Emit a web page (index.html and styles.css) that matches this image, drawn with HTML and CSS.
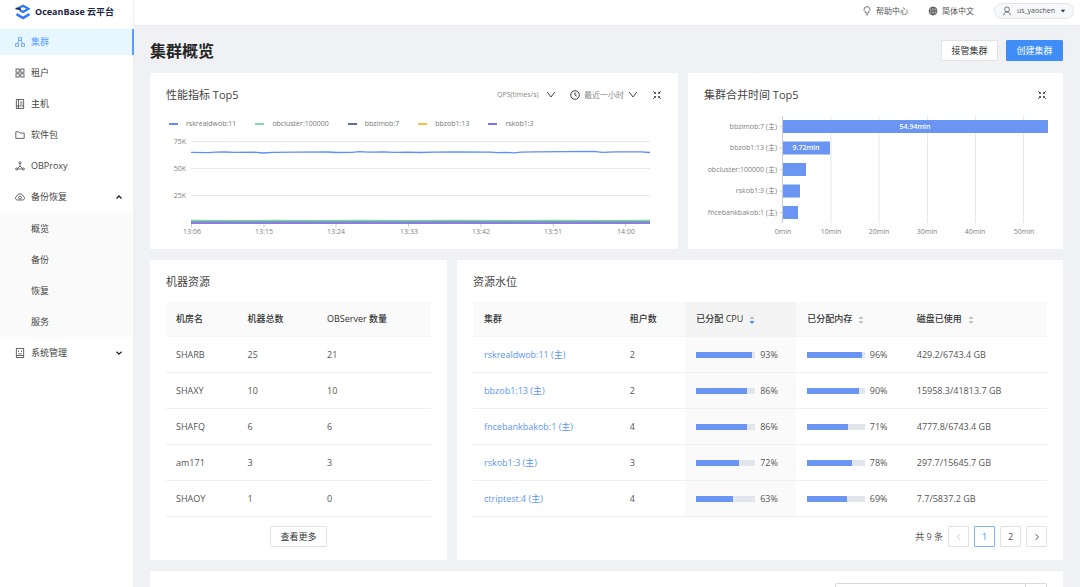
FILE: index.html
```html
<!DOCTYPE html>
<html lang="zh-CN">
<head>
    <meta charset="UTF-8">
    <meta name="viewport" content="width=device-width, initial-scale=1.0">
    <title>OceanBase 云平台</title>
    <link rel="stylesheet" href="styles.css">
</head>
<body>

<div class="layout">
    <aside class="sidebar">
        <div class="logo">
            <svg class="logo-icon" viewBox="0 0 16 16">
                <path d="M2.500 4.800L8 1.700l5.500 3.100L8 7.900 4.800 6.200" stroke="#2b7bf5" stroke-width="2.200"/>
                <path d="M.5 4.600h3.200l2 1" stroke="#16295c" stroke-width="1.800"/>
                <path d="M1.500 10.200L8 14l6.500-3.800" stroke="#2b7bf5" stroke-width="2.500"/>
            </svg>
            <span>OceanBase 云平台</span>
        </div>
        <nav class="menu">
            <a class="menu-item active" href="#">
                <svg class="icon" viewBox="0 0 10 10"><rect x="3.500" y=".7" width="3" height="2.600"/><rect x=".6" y="6.700" width="3" height="2.600"/><rect x="6.400" y="6.700" width="3" height="2.600"/><path d="M4.300 3.300L2.100 6.700M5.700 3.300l2.200 3.400"/></svg>
                集群
            </a>
            <a class="menu-item" href="#">
                <svg class="icon" viewBox="0 0 10 10"><rect x="1" y="1" width="3.200" height="3.200"/><rect x="5.800" y="1" width="3.200" height="3.200"/><rect x="1" y="5.800" width="3.200" height="3.200"/><rect x="5.800" y="5.800" width="3.200" height="3.200"/></svg>
                租户
            </a>
            <a class="menu-item" href="#">
                <svg class="icon" viewBox="0 0 10 10"><rect x="1.300" y=".6" width="7.400" height="8.800"/><path d="M3.500.6v8.800M5 3h2.500M5 5h2.500M1.300 7h7.400"/></svg>
                主机
            </a>
            <a class="menu-item" href="#">
                <svg class="icon" viewBox="0 0 10 10"><path d="M.8 1.800h3l1.200 1.300h4.200v5.300H.8z"/></svg>
                软件包
            </a>
            <a class="menu-item" href="#">
                <svg class="icon" viewBox="0 0 10 10"><circle cx="5" cy="1.800" r="1"/><circle cx="1.600" cy="8" r="1"/><circle cx="8.400" cy="8" r="1"/><path d="M5 2.800v2.400M5 5.200L2.300 7.400M5 5.200l2.700 2.200M2.600 8h4.800"/></svg>
                OBProxy
            </a>
            <a class="menu-item" href="#">
                <svg class="icon" viewBox="0 0 10 10"><path d="M2.600 8C1.200 8 .5 7.200.5 6.100S1.300 4.300 2 4.100C2.400 2.600 3.500 1.800 5 1.800s2.600.8 3 2.300c.9.200 1.500.9 1.500 2S8.800 8 7.400 8z"/><circle cx="5" cy="5.600" r="1.400"/></svg>
                备份恢复
                <svg class="arrow" viewBox="0 0 8 8"><path d="M1.500 5.500L4 3l2.500 2.500"/></svg>
            </a>
            <div class="submenu">
                <a class="submenu-item" href="#">概览</a>
                <a class="submenu-item" href="#">备份</a>
                <a class="submenu-item" href="#">恢复</a>
                <a class="submenu-item" href="#">服务</a>
            </div>
            <a class="menu-item" href="#">
                <svg class="icon" viewBox="0 0 10 10"><rect x="1.300" y=".6" width="7.400" height="8.800"/><path d="M3.500 2.500v1.500M6.500 2.500v1.500M3.300 5.300c1 1 2.400 1 3.400 0M1.300 7.500h7.400"/></svg>
                系统管理
                <svg class="arrow" viewBox="0 0 8 8"><path d="M1.500 2.700L4 5.200l2.500-2.500"/></svg>
            </a>
        </nav>
    </aside>

    <div class="content">
        <header class="topbar">
            <a class="top-link" href="#">
                <svg class="icon" viewBox="0 0 10 10"><path d="M3.600 7V6C2.600 5.400 2 4.600 2 3.600a3 3 0 0 1 6 0c0 1-.6 1.800-1.600 2.400v1zM3.800 8.800h2.400"/></svg>
                帮助中心
            </a>
            <a class="top-link" href="#">
                <svg class="icon" viewBox="0 0 10 10"><circle cx="5" cy="5" r="4" fill="#bbb"/><path d="M1 5h8M5 1v8"/><ellipse cx="5" cy="5" rx="2" ry="4"/></svg>
                简体中文
            </a>
            <button class="user">
                <svg class="icon" viewBox="0 0 10 10"><circle cx="5" cy="3.400" r="2.400"/><path d="M1.700 9.300C1.900 7.200 3.200 6 5 6s3.100 1.200 3.300 3.300"/></svg>
                us_yaochen
                <svg class="caret" viewBox="0 0 6 6"><path d="M.8 1.800h4.400L3 4.600z"/></svg>
            </button>
        </header>

        <main class="main">
            <div class="page-head">
                <h1>集群概览</h1>
                <button class="btn">接管集群</button>
                <button class="btn primary">创建集群</button>
            </div>

            <div class="row row-charts">
                <section class="card chart-card">
                    <div class="card-head">
                        <h2>性能指标 Top5</h2>
                        <label class="picker">
                            <select class="metric" aria-label="指标"><option>QPS(times/s)</option></select>
                            <svg class="down" viewBox="0 0 10 10"><path d="M1.200 2L5 7l3.800-5"/></svg>
                        </label>
                        <label class="picker">
                            <svg class="clock" viewBox="0 0 10 10"><circle cx="5" cy="5" r="4.300"/><path d="M5 2.300V5l1.800 1.200"/></svg>
                            <select class="range" aria-label="时间范围"><option>最近一小时</option></select>
                            <svg class="down" viewBox="0 0 10 10"><path d="M1.200 2L5 7l3.800-5"/></svg>
                        </label>
                        <button class="expand" aria-label="全屏"><svg viewBox="0 0 10 10"><path d="M1.200 1.200l2.200 2.200M8.800 1.200L6.600 3.400M1.200 8.800l2.200-2.200M8.800 8.800L6.600 6.600M2.200 3.500h1.300V2.200M7.800 3.500H6.500V2.200M2.200 6.500h1.300v1.300M7.800 6.500H6.500v1.300"/></svg></button>
                    </div>
                    <div class="legend">
                        <span class="legend-item c-blue">rskrealdwob:11</span>
                        <span class="legend-item c-green">obcluster:100000</span>
                        <span class="legend-item c-dark">bbzimob:7</span>
                        <span class="legend-item c-yellow">bbzob1:13</span>
                        <span class="legend-item c-purple">rskob1:3</span>
                    </div>
                    <svg class="line-chart" viewBox="0 0 496 106">
                        <path class="grid" d="M25 7.500h459M25 34.500h459M25 61.500h459"/>
                        <path class="axis" d="M25.500 90v3M98 90v3M170 90v3M242.500 90v3M315 90v3M387.500 90v3M459.500 90v3"/>
                        <polyline class="line dark" points="25,88 484,88"/>
                        <polyline class="line purple" points="25,89 484,89"/>
                        <polyline class="line green" points="25,86.500 65,86.700 105,86.500 150,86.700 195,86.500 240,86.700 290,86.400 350,86.700 390,86.500 440,86.700 484,86.500"/>
                        <polyline class="line blue" points="25,18.300 42,18.600 50,18.100 58,18 70,18.400 88,18.200 97,19 107,18.400 130,18.200 162,18 170,18.500 186,18.400 193,17.600 203,18.200 218,17.800 228,18.300 240,18.200 254,18.500 268,18.200 290,18 324,18.200 332,18.700 340,18.300 348,18.900 355,18.200 370,17.900 400,17.700 428,17.300 436,18.300 450,17.900 475,17.900 484,18.500"/>
                        <g class="y-labels">
                            <text x="20" y="10">75K</text>
                            <text x="20" y="37">50K</text>
                            <text x="20" y="64">25K</text>
                        </g>
                        <g class="x-labels">
                            <text x="26" y="100">13:06</text>
                            <text x="98" y="100">13:15</text>
                            <text x="170" y="100">13:24</text>
                            <text x="243" y="100">13:33</text>
                            <text x="315" y="100">13:42</text>
                            <text x="387" y="100">13:51</text>
                            <text x="460" y="100">14:00</text>
                        </g>
                    </svg>
                </section>

                <section class="card chart-card">
                    <div class="card-head">
                        <h2>集群合并时间 Top5</h2>
                        <button class="expand" aria-label="全屏"><svg viewBox="0 0 10 10"><path d="M1.200 1.200l2.200 2.200M8.800 1.200L6.600 3.400M1.200 8.800l2.200-2.200M8.800 8.800L6.600 6.600M2.200 3.500h1.300V2.200M7.800 3.500H6.500V2.200M2.200 6.500h1.300v1.300M7.800 6.500H6.500v1.300"/></svg></button>
                    </div>
                    <svg class="bar-chart" viewBox="0 0 343 128">
                        <path class="grid" d="M127 4v107M175 4v107M223.500 4v107M271.500 4v107M319.500 4v107"/>
                        <path class="axis" d="M78.500 4v107M76 14.500h2.500M76 36h2.500M76 57.500h2.500M76 79h2.500M76 100.500h2.500"/>
                        <rect class="bar" x="79" y="8" width="265" height="13"/>
                        <rect class="bar" x="79" y="29.500" width="47" height="13"/>
                        <rect class="bar" x="79" y="51" width="23" height="13"/>
                        <rect class="bar" x="79" y="72.500" width="17" height="13"/>
                        <rect class="bar" x="79" y="94" width="15" height="13"/>
                        <text class="bar-value" x="211" y="17">54.94min</text>
                        <text class="bar-value" x="102" y="38">9.72min</text>
                        <g class="y-labels">
                            <text x="73" y="17">bbzimob:7 (主)</text>
                            <text x="73" y="38">bbzob1:13 (主)</text>
                            <text x="73" y="60">obcluster:100000 (主)</text>
                            <text x="73" y="81">rskob1:3 (主)</text>
                            <text x="73" y="103">fncebankbakob:1 (主)</text>
                        </g>
                        <g class="x-labels">
                            <text x="79" y="122">0min</text>
                            <text x="127" y="122">10min</text>
                            <text x="175" y="122">20min</text>
                            <text x="223" y="122">30min</text>
                            <text x="271" y="122">40min</text>
                            <text x="320" y="122">50min</text>
                        </g>
                    </svg>
                </section>
            </div>

            <div class="row row-tables">
                <section class="card table-card">
                    <div class="card-head"><h2>机器资源</h2></div>
                    <table class="machines">
                        <thead>
                            <tr><th>机房名</th><th>机器总数</th><th>OBServer 数量</th></tr>
                        </thead>
                        <tbody>
                            <tr><td>SHARB</td><td>25</td><td>21</td></tr>
                            <tr><td>SHAXY</td><td>10</td><td>10</td></tr>
                            <tr><td>SHAFQ</td><td>6</td><td>6</td></tr>
                            <tr><td>am171</td><td>3</td><td>3</td></tr>
                            <tr><td>SHAOY</td><td>1</td><td>0</td></tr>
                        </tbody>
                    </table>
                    <div class="more"><button class="btn">查看更多</button></div>
                </section>

                <section class="card table-card">
                    <div class="card-head"><h2>资源水位</h2></div>
                    <table class="levels">
                        <thead>
                            <tr>
                                <th>集群</th>
                                <th>租户数</th>
                                <th class="sorted">已分配 CPU<svg class="sorter desc" viewBox="0 0 6 10"><path d="M3 1l2.500 3h-5z"/><path d="M3 9L.5 6h5z"/></svg></th>
                                <th>已分配内存<svg class="sorter" viewBox="0 0 6 10"><path d="M3 1l2.500 3h-5z"/><path d="M3 9L.5 6h5z"/></svg></th>
                                <th>磁盘已使用<svg class="sorter" viewBox="0 0 6 10"><path d="M3 1l2.500 3h-5z"/><path d="M3 9L.5 6h5z"/></svg></th>
                            </tr>
                        </thead>
                        <tbody>
                            <tr>
                                <td><a href="#">rskrealdwob:11 (主)</a></td>
                                <td>2</td>
                                <td class="sorted"><div class="progress"><div class="track"><div class="fill" style="width: 94%"></div></div><span>93%</span></div></td>
                                <td><div class="progress"><div class="track"><div class="fill" style="width: 96%"></div></div><span>96%</span></div></td>
                                <td>429.2/6743.4 GB</td>
                            </tr>
                            <tr>
                                <td><a href="#">bbzob1:13 (主)</a></td>
                                <td>2</td>
                                <td class="sorted"><div class="progress"><div class="track"><div class="fill" style="width: 87%"></div></div><span>86%</span></div></td>
                                <td><div class="progress"><div class="track"><div class="fill" style="width: 90%"></div></div><span>90%</span></div></td>
                                <td>15958.3/41813.7 GB</td>
                            </tr>
                            <tr>
                                <td><a href="#">fncebankbakob:1 (主)</a></td>
                                <td>4</td>
                                <td class="sorted"><div class="progress"><div class="track"><div class="fill" style="width: 86%"></div></div><span>86%</span></div></td>
                                <td><div class="progress"><div class="track"><div class="fill" style="width: 71%"></div></div><span>71%</span></div></td>
                                <td>4777.8/6743.4 GB</td>
                            </tr>
                            <tr>
                                <td><a href="#">rskob1:3 (主)</a></td>
                                <td>3</td>
                                <td class="sorted"><div class="progress"><div class="track"><div class="fill" style="width: 72%"></div></div><span>72%</span></div></td>
                                <td><div class="progress"><div class="track"><div class="fill" style="width: 78%"></div></div><span>78%</span></div></td>
                                <td>297.7/15645.7 GB</td>
                            </tr>
                            <tr>
                                <td><a href="#">ctriptest:4 (主)</a></td>
                                <td>4</td>
                                <td class="sorted"><div class="progress"><div class="track"><div class="fill" style="width: 63%"></div></div><span>63%</span></div></td>
                                <td><div class="progress"><div class="track"><div class="fill" style="width: 69%"></div></div><span>69%</span></div></td>
                                <td>7.7/5837.2 GB</td>
                            </tr>
                        </tbody>
                    </table>
                    <div class="pagination">
                        <span>共 9 条</span>
                        <button class="page" disabled aria-label="上一页"><svg viewBox="0 0 8 8"><path d="M5.500 1.200L2.500 4l3 2.800"/></svg></button>
                        <button class="page current">1</button>
                        <button class="page">2</button>
                        <button class="page" aria-label="下一页"><svg viewBox="0 0 8 8"><path d="M2.500 1.200L5.500 4l-3 2.800"/></svg></button>
                    </div>
                </section>
            </div>

            <section class="card search-card">
                <div class="search">
                    <input type="text" aria-label="搜索">
                    <button aria-label="搜索"></button>
                </div>
            </section>
        </main>
    </div>
</div>

</body>
</html>
```
FILE: styles.css
```css
* {
    box-sizing: border-box;
}
body {
    margin: 0;
    font-family: 'Open Sans', 'Noto Sans CJK SC', sans-serif;
    font-size: 9px;
    line-height: 14px;
    color: #555;
    background-color: #eff1f5;
}
a {
    color: inherit;
    text-decoration: none;
}
button, input, select {
    font: inherit;
    color: inherit;
}
button {
    cursor: pointer;
}
svg {
    display: block;
    fill: none;
    stroke: currentColor;
}
.layout {
    display: flex;
    height: 100vh;
}

/* 左侧菜单 */
.sidebar {
    flex: none;
    width: 134px;
    background-color: #fff;
    border-right: 1px solid #f0f0f0;
}
.logo {
    display: flex;
    align-items: center;
    gap: 4px;
    height: 24px;
    padding-left: 15px;
    color: #1b2440;
    font-weight: bold;
    white-space: nowrap;
}
.logo-icon {
    width: 16px;
    height: 16px;
}
.menu {
    padding-top: 5px;
}
.menu-item {
    display: flex;
    align-items: center;
    height: 26px;
    margin-bottom: 5px;
    padding: 0 10px 0 15px;
    color: #444;
}
.menu-item .icon {
    margin-right: 6px;
}
.menu-item.active {
    color: #5a9cff;
    background-color: #e6f7ff;
    border-right: 2px solid #5a9cff;
    margin-right: -1px;
}
.icon {
    width: 10px;
    height: 10px;
    stroke-width: 0.8;
}
.arrow {
    width: 8px;
    height: 8px;
    margin-left: auto;
    stroke: #222;
    stroke-width: 1.3;
}
.submenu {
    margin: -2px 0 3px;
    background-color: #fafafa;
}
.submenu-item {
    display: block;
    padding-left: 31px;
    line-height: 31px;
    color: #444;
}

/* 顶部 */
.content {
    flex: 1;
    min-width: 0;
    display: flex;
    flex-direction: column;
}
.topbar {
    flex: none;
    display: flex;
    justify-content: flex-end;
    align-items: center;
    gap: 20px;
    height: 26px;
    padding: 0 6px 4px 0;
    font-size: 8px;
    background-color: #fff;
    border-bottom: 1px solid #e8eaee;
}
.top-link {
    display: flex;
    align-items: center;
    gap: 4px;
}
.user {
    display: flex;
    align-items: center;
    justify-content: space-between;
    width: 80px;
    height: 16px;
    padding: 0 7px;
    border: 1px solid #e3e5ea;
    border-radius: 8px;
    background-color: #f7f8fb;
    font-size: 7px;
}
.caret {
    width: 6px;
    height: 6px;
    fill: #333;
    stroke: none;
}

/* 主体 */
.main {
    flex: 1;
    overflow-y: auto;
    scrollbar-width: none;
    padding: 14px 17px 16px 16px;
}
.page-head {
    display: flex;
    align-items: center;
    gap: 8px;
    margin-bottom: 12px;
}
h1 {
    flex: 1;
    margin: 0;
    font-size: 16px;
    line-height: 20px;
    color: #262626;
}
.btn {
    width: 57px;
    height: 21px;
    padding: 0;
    border: 1px solid #e2e2e2;
    border-radius: 1px;
    background-color: #fff;
    color: #333;
}
.btn.primary {
    color: #fff;
    background-color: #3f8ef7;
    border-color: #3f8ef7;
}
.row {
    display: grid;
    gap: 10px;
    margin-bottom: 11px;
}
.row-charts {
    grid-template-columns: 528fr 375fr;
}
.row-tables {
    grid-template-columns: 297fr 606fr;
}
.card {
    min-width: 0;
    padding: 14px 16px;
    background-color: #fff;
    border-radius: 1px;
}
.chart-card {
    padding-bottom: 9px;
}
.table-card {
    padding-bottom: 13px;
}
.card-head {
    display: flex;
    align-items: center;
    height: 16px;
}
h2 {
    flex: 1;
    margin: 0;
    font-size: 11px;
    font-weight: normal;
    line-height: 16px;
    color: #444;
}

/* 图表 */
.picker {
    display: flex;
    align-items: center;
    gap: 4px;
    margin-right: 14px;
    color: #888;
    font-size: 8px;
}
.picker select {
    appearance: none;
    padding: 0;
    border: 0;
    background: none;
}
.picker .metric {
    width: 45px;
    font-size: 7px;
}
.range {
    width: 40px;
}
.down, .clock {
    width: 10px;
    height: 10px;
    stroke: #444;
}
.expand {
    padding: 0;
    border: 0;
    background: none;
    color: #333;
}
.expand svg {
    width: 10px;
    height: 10px;
    stroke-width: 0.9;
}
.legend {
    display: flex;
    gap: 19px;
    margin: 14px 0 3px;
    padding-left: 3px;
    font-size: 7px;
    color: #777;
}
.legend-item {
    display: flex;
    align-items: center;
    gap: 8px;
}
.legend-item::before {
    content: '';
    width: 9px;
    height: 2px;
    background-color: #5b8ff9;
}
.c-green::before {
    background-color: #82dbb3;
}
.c-dark::before {
    background-color: #5d7092;
}
.c-yellow::before {
    background-color: #f6bd4a;
}
.c-purple::before {
    background-color: #7e70ec;
}
.line-chart, .bar-chart {
    width: 100%;
    height: auto;
    overflow: visible;
}
.bar-chart {
    margin-top: 9px;
}
.grid {
    stroke: #e8e8e8;
}
.axis {
    stroke: #ccc;
}
.line {
    stroke-width: 1.3;
}
.blue {
    stroke: #5b8ff9;
}
.green {
    stroke: #6fd6a6;
}
.dark {
    stroke: #5d7092;
}
.purple {
    stroke: #8a7ee6;
    stroke-width: 2;
}
.bar {
    fill: #6b95f2;
    stroke: none;
}
.line-chart text, .bar-chart text {
    font-size: 7px;
    fill: #808080;
    stroke: none;
}
.y-labels {
    text-anchor: end;
}
.x-labels {
    text-anchor: middle;
}
.bar-chart .bar-value {
    fill: #fff;
    text-anchor: middle;
    font-weight: 600;
}

/* 表格 */
table {
    width: 100%;
    margin-top: 12px;
    table-layout: fixed;
    border-collapse: separate;
    border-spacing: 0;
}
th, td {
    height: 36px;
    padding: 0 10px;
    text-align: left;
    white-space: nowrap;
    border-bottom: 1px solid #f0f0f0;
}
th {
    height: 35px;
    font-weight: 500;
    color: #333;
    background-color: #fafafa;
    border-bottom-color: #f5f5f5;
}
td a {
    color: #5a96f8;
}
.machines th:nth-child(1) {
    width: 27%;
}
.machines th:nth-child(2) {
    width: 30%;
}
.levels th, .levels td {
    padding: 0 11px;
}
.levels th:nth-child(1) {
    width: 25.4%;
}
.levels th:nth-child(2) {
    width: 11.6%;
}
.levels th:nth-child(3) {
    width: 19.3%;
}
.levels th:nth-child(4) {
    width: 19.1%;
}
td.sorted {
    background-color: #fafafa;
}
th.sorted {
    background-color: #f4f4f4;
}
.sorter {
    display: inline-block;
    width: 6px;
    height: 10px;
    margin-left: 6px;
    vertical-align: middle;
    fill: #bfbfbf;
    stroke: none;
}
.sorter.desc path:last-child {
    fill: #3f8ef7;
}
.progress {
    display: flex;
    align-items: center;
    gap: 5px;
}
.track {
    flex: 1;
    height: 6px;
    background-color: #e2e6ec;
}
.fill {
    height: 100%;
    background-color: #6b95f2;
}
.progress span {
    width: 25px;
}
.more {
    margin-top: 9px;
}
.more .btn {
    display: block;
    margin: 0 auto;
}
.pagination {
    display: flex;
    justify-content: flex-end;
    align-items: center;
    gap: 5px;
    margin-top: 9px;
}
.page {
    display: flex;
    align-items: center;
    justify-content: center;
    width: 21px;
    height: 21px;
    padding: 0;
    border: 1px solid #e2e2e2;
    border-radius: 1px;
    background-color: #fff;
}
.page svg {
    width: 8px;
    height: 8px;
}
.page:disabled {
    color: #ccc;
}
.page.current {
    color: #3f8ef7;
    border-color: #7db4fb;
}

/* 搜索 */
.search-card {
    padding-top: 12px;
}
.search {
    display: flex;
    width: 212px;
    margin-left: auto;
}
.search input {
    flex: 1;
    min-width: 0;
    height: 21px;
    border: 1px solid #d9d9d9;
    border-radius: 2px 0 0 2px;
}
.search button {
    width: 21px;
    height: 21px;
    border: 1px solid #d9d9d9;
    border-left: 0;
    border-radius: 0 2px 2px 0;
    background-color: #fff;
}
```
